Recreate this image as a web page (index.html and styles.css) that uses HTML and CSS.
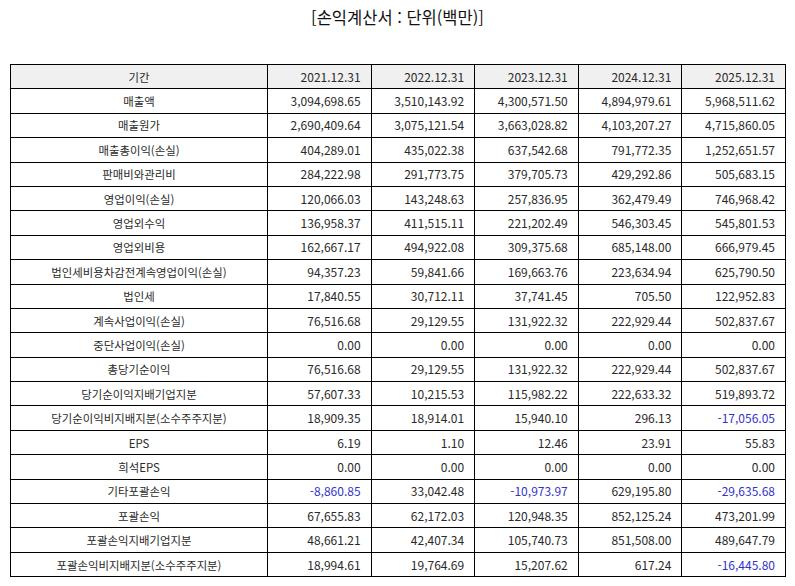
FILE: index.html
```html
<!DOCTYPE html>
<html lang="ko">
<head>
<meta charset="utf-8">
<link rel="stylesheet" href="styles.css">
</head>
<body>
<div class="page">
  <h1 class="title">[손익계산서 : 단위(백만)]</h1>
  <table class="fin">
    <colgroup>
      <col class="c-label"><col class="c-num"><col class="c-num"><col class="c-num"><col class="c-num"><col class="c-num">
    </colgroup>
    <thead>
      <tr><th class="label">기간</th><th>2021.12.31</th><th>2022.12.31</th><th>2023.12.31</th><th>2024.12.31</th><th>2025.12.31</th></tr>
    </thead>
    <tbody>
      <tr><td class="label">매출액</td><td>3,094,698.65</td><td>3,510,143.92</td><td>4,300,571.50</td><td>4,894,979.61</td><td>5,968,511.62</td></tr>
      <tr><td class="label">매출원가</td><td>2,690,409.64</td><td>3,075,121.54</td><td>3,663,028.82</td><td>4,103,207.27</td><td>4,715,860.05</td></tr>
      <tr><td class="label">매출총이익(손실)</td><td>404,289.01</td><td>435,022.38</td><td>637,542.68</td><td>791,772.35</td><td>1,252,651.57</td></tr>
      <tr><td class="label">판매비와관리비</td><td>284,222.98</td><td>291,773.75</td><td>379,705.73</td><td>429,292.86</td><td>505,683.15</td></tr>
      <tr><td class="label">영업이익(손실)</td><td>120,066.03</td><td>143,248.63</td><td>257,836.95</td><td>362,479.49</td><td>746,968.42</td></tr>
      <tr><td class="label">영업외수익</td><td>136,958.37</td><td>411,515.11</td><td>221,202.49</td><td>546,303.45</td><td>545,801.53</td></tr>
      <tr><td class="label">영업외비용</td><td>162,667.17</td><td>494,922.08</td><td>309,375.68</td><td>685,148.00</td><td>666,979.45</td></tr>
      <tr><td class="label">법인세비용차감전계속영업이익(손실)</td><td>94,357.23</td><td>59,841.66</td><td>169,663.76</td><td>223,634.94</td><td>625,790.50</td></tr>
      <tr><td class="label">법인세</td><td>17,840.55</td><td>30,712.11</td><td>37,741.45</td><td>705.50</td><td>122,952.83</td></tr>
      <tr><td class="label">계속사업이익(손실)</td><td>76,516.68</td><td>29,129.55</td><td>131,922.32</td><td>222,929.44</td><td>502,837.67</td></tr>
      <tr><td class="label">중단사업이익(손실)</td><td>0.00</td><td>0.00</td><td>0.00</td><td>0.00</td><td>0.00</td></tr>
      <tr><td class="label">총당기순이익</td><td>76,516.68</td><td>29,129.55</td><td>131,922.32</td><td>222,929.44</td><td>502,837.67</td></tr>
      <tr><td class="label">당기순이익지배기업지분</td><td>57,607.33</td><td>10,215.53</td><td>115,982.22</td><td>222,633.32</td><td>519,893.72</td></tr>
      <tr><td class="label">당기순이익비지배지분(소수주주지분)</td><td>18,909.35</td><td>18,914.01</td><td>15,940.10</td><td>296.13</td><td class="neg">-17,056.05</td></tr>
      <tr><td class="label">EPS</td><td>6.19</td><td>1.10</td><td>12.46</td><td>23.91</td><td>55.83</td></tr>
      <tr><td class="label">희석EPS</td><td>0.00</td><td>0.00</td><td>0.00</td><td>0.00</td><td>0.00</td></tr>
      <tr><td class="label">기타포괄손익</td><td class="neg">-8,860.85</td><td>33,042.48</td><td class="neg">-10,973.97</td><td>629,195.80</td><td class="neg">-29,635.68</td></tr>
      <tr><td class="label">포괄손익</td><td>67,655.83</td><td>62,172.03</td><td>120,948.35</td><td>852,125.24</td><td>473,201.99</td></tr>
      <tr><td class="label">포괄손익지배기업지분</td><td>48,661.21</td><td>42,407.34</td><td>105,740.73</td><td>851,508.00</td><td>489,647.79</td></tr>
      <tr><td class="label">포괄손익비지배지분(소수주주지분)</td><td>18,994.61</td><td>19,764.69</td><td>15,207.62</td><td>617.24</td><td class="neg">-16,445.80</td></tr>
    </tbody>
  </table>
</div>
</body>
</html>
```

FILE: styles.css
```css
html, body {
  margin: 0;
  padding: 0;
  background: #fff;
}

.page {
  padding: 0 10px;
  font-family: "Noto Sans CJK KR", "Noto Sans", sans-serif;
  color: #222;
}

.title {
  margin: 0;
  height: 64px;
  padding-top: 4px;
  box-sizing: border-box;
  text-align: center;
  font-size: 16.5px;
  font-weight: normal;
  line-height: 26px;
  color: #111;
}

.fin {
  width: 775px;
  border-collapse: collapse;
  table-layout: fixed;
  font-size: 12px;
}

.c-label { width: 257px; }
.c-num { width: 103.6px; }

.fin th,
.fin td {
  border: 1px solid #000;
  height: 23.4px;
  padding: 0 10px 0 4px;
  text-align: right;
  font-weight: normal;
  white-space: nowrap;
  line-height: 14px;
  color: #2a2a2a;
}

.fin th {
  background: #f0f0f0;
}

.fin .label {
  text-align: center;
  padding: 0 4px;
  font-size: 11.4px;
}

.fin .neg {
  color: #3333cc;
}
```
